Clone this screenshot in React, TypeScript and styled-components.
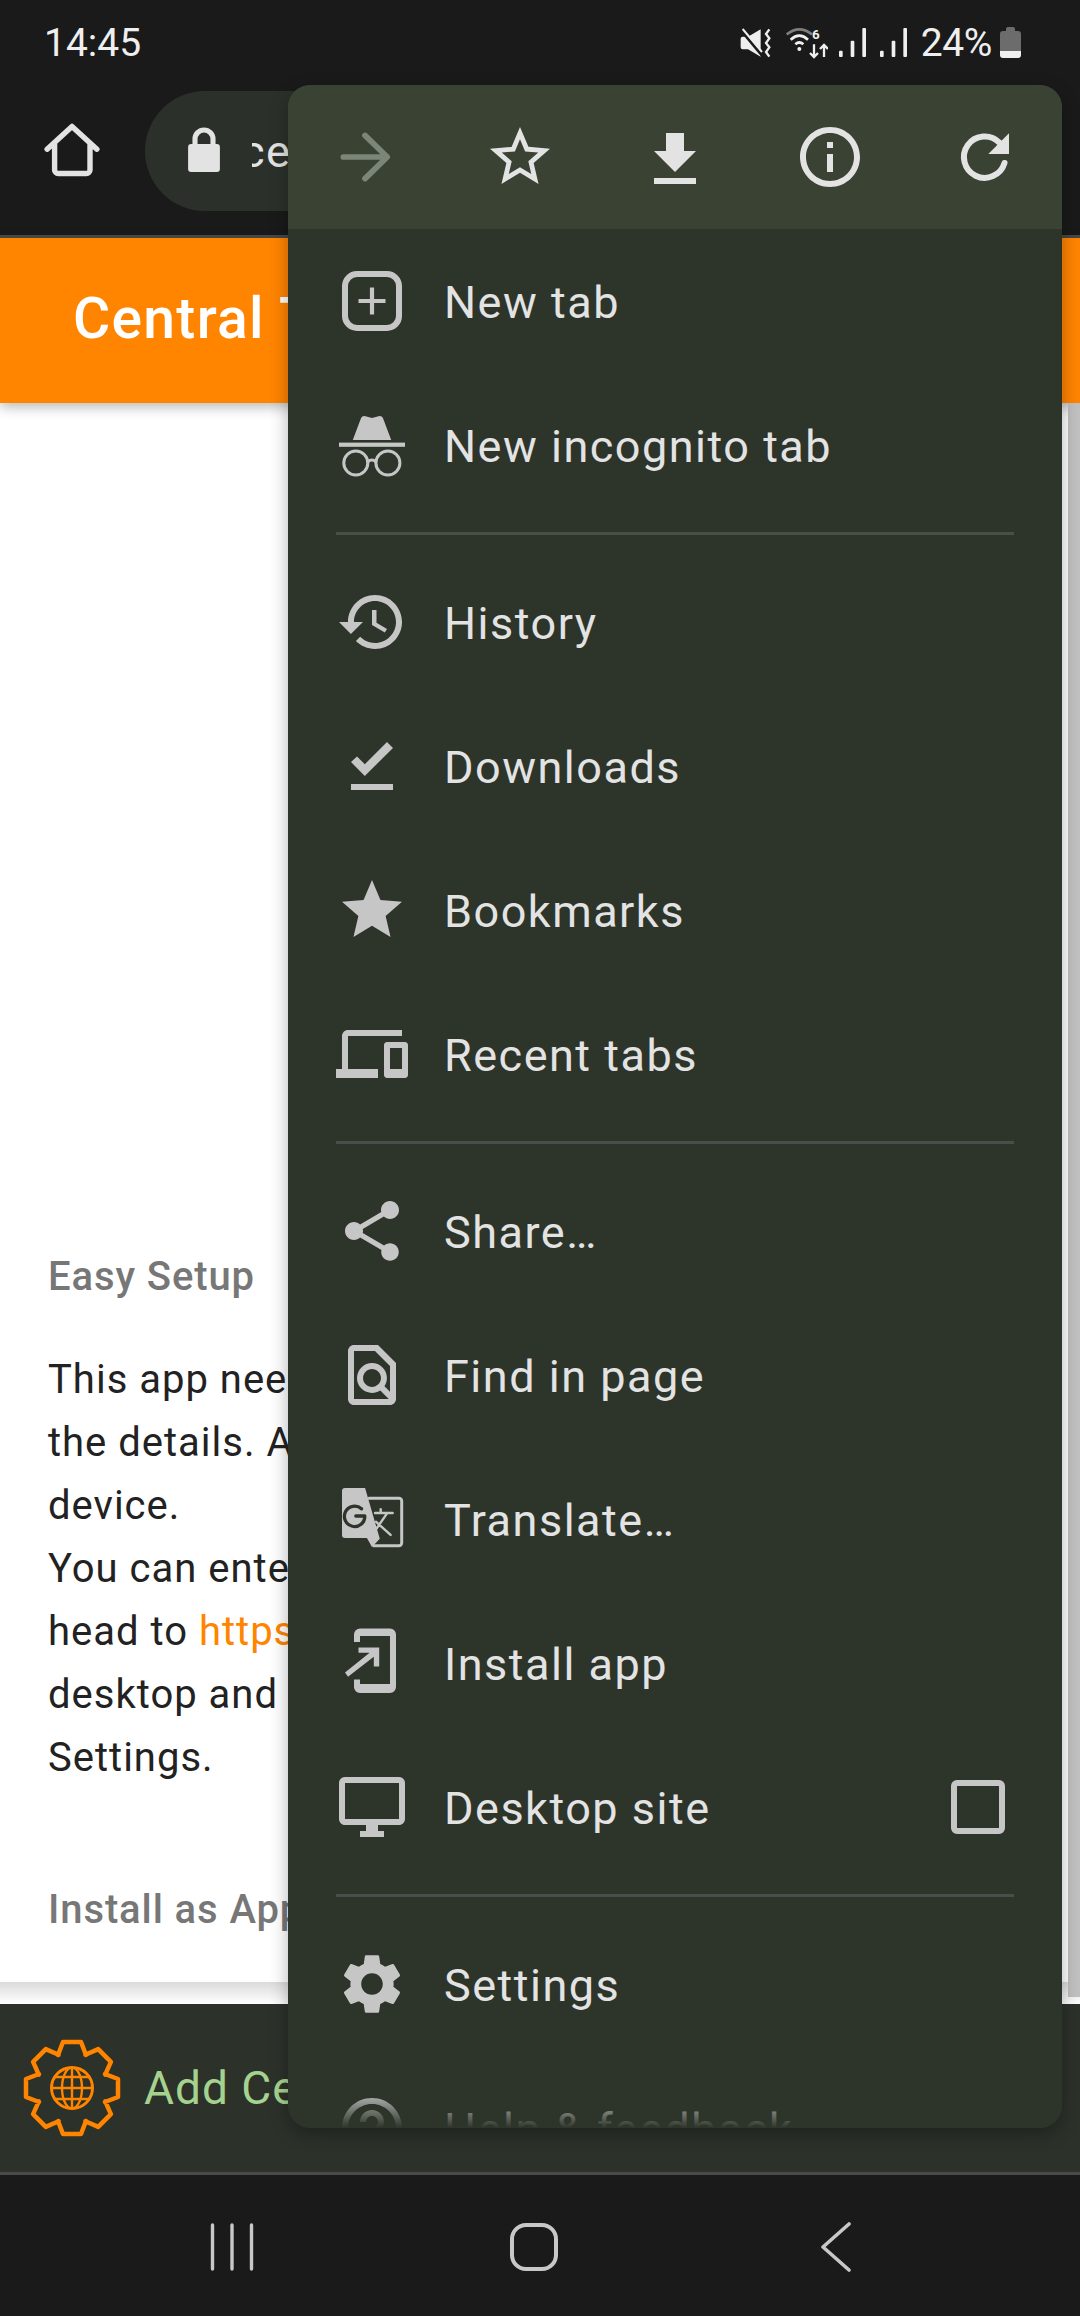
import React from 'react';

import styled, { createGlobalStyle } from 'styled-components';

const GlobalStyle = createGlobalStyle`
  html, body {
    margin: 0;
    padding: 0;
    background: #1a1a1a;
  }
  * {
    box-sizing: border-box;
  }
`;

const Screen = styled.div`
  position: relative;
  display: flex;
  flex-direction: column;
  width: 1080px;
  height: 2316px;
  overflow: hidden;
  font-family: Roboto, 'Noto Sans', sans-serif;
`;

const Chrome = styled.header`
  background: #1a1a1a;
  border-bottom: 3px solid #4a4a4a;
  height: 238px;
`;

const StatusBar = styled.div`
  display: flex;
  align-items: center;
  height: 67px;
  padding: 18px 59px 0 44px;
  color: #efefef;
`;

const Clock = styled.span`
  font-size: 39px;
`;

const StatusIcons = styled.div`
  display: flex;
  align-items: center;
  margin-left: auto;
`;

const StatusSvg = styled.svg<{ $left?: number }>`
  display: block;
  flex: none;
  margin-left: ${({ $left }) => $left || 0}px;
`;

const Percent = styled.span`
  margin-left: 14px;
  margin-right: 8px;
  font-size: 39px;
  letter-spacing: -0.4px;
`;

const Toolbar = styled.div`
  display: flex;
  align-items: center;
  height: 168px;
  padding-left: 36px;
`;

const Pill = styled.div`
  display: flex;
  align-items: center;
  flex: none;
  width: 900px;
  height: 120px;
  margin-left: 37px;
  padding-left: 23px;
  border-radius: 60px;
  background: #2b312a;
`;

const UrlClip = styled.div`
  width: 300px;
  margin-left: 12px;
  overflow: hidden;
  color: #e3e3e3;
  font-size: 45px;
  letter-spacing: 1.5px;
  white-space: nowrap;
`;

const UrlText = styled.span`
  display: block;
  margin-left: -11px;
`;

const Page = styled.main`
  position: relative;
  display: flex;
  flex-direction: column;
  flex: 1;
  background: #fff;
`;

const Banner = styled.div`
  display: flex;
  align-items: center;
  height: 165px;
  padding: 0 0 4px 73px;
  background: #ff8400;
  box-shadow: 0 4px 12px rgba(0, 0, 0, 0.28);
  color: #fff;
  font-size: 57px;
  font-weight: 500;
  letter-spacing: 1.3px;
  white-space: nowrap;
`;

const Article = styled.article`
  flex: 1;
  padding: 842px 0 0 48px;
  color: #222;
  font-size: 40px;
  letter-spacing: 1px;
  line-height: 63px;
  white-space: nowrap;
`;

const Heading = styled.h2`
  margin: 0;
  color: #777;
  font-size: 40px;
  font-weight: 500;
  letter-spacing: 0.9px;
  line-height: 63px;
`;

const Paragraph = styled.p`
  margin: 40px 0 89px;
`;

const PageLink = styled.a`
  color: #ff8400;
`;

const ContentEdge = styled.div`
  height: 22px;
  border-top: 1px solid #dcdcdc;
  background: linear-gradient(#dcdcdc, #ffffff);
`;

const Scrollbar = styled.div`
  position: absolute;
  top: 165px;
  right: 0;
  width: 12px;
  height: 1594px;
  background: #c1c1c1;
`;

const InstallBar = styled.div`
  display: flex;
  align-items: center;
  gap: 22px;
  height: 171px;
  padding: 0 0 0 22px;
  background: #2c312a;
  border-bottom: 3px solid #4a4a4a;
  color: #a5d38f;
  font-size: 46px;
  letter-spacing: 1px;
  white-space: nowrap;
`;

const NavBar = styled.nav`
  display: flex;
  align-items: center;
  height: 141px;
  padding: 2px 93px 0 81px;
  background: #1a1a1a;
`;

const NavSlot = styled.div`
  display: flex;
  flex: 1;
  justify-content: center;
`;

const Menu = styled.div`
  position: absolute;
  top: 85px;
  left: 288px;
  width: 774px;
  height: 2043px;
  overflow: hidden;
  border-radius: 22px;
  background: #2d342a;
  box-shadow: 0 6px 18px rgba(0, 0, 0, 0.3);
  &::after {
    content: '';
    position: absolute;
    left: 0;
    right: 0;
    bottom: 0;
    height: 38px;
    background: linear-gradient(rgba(45, 52, 42, 0), #2d342a);
  }
`;

const ActionRow = styled.div`
  display: grid;
  grid-template-columns: repeat(5, 1fr);
  height: 144px;
  background: #3a4333;
`;

const ActionCell = styled.div`
  display: flex;
  align-items: center;
  justify-content: center;
`;

const MenuRow = styled.div`
  display: flex;
  align-items: center;
  gap: 36px;
  height: 144px;
  padding: 0 57px 0 48px;
  color: #e3e3e3;
  font-size: 45px;
  letter-spacing: 1.5px;
`;

const RowLabel = styled.span`
  flex: 1;
  margin-top: 2px;
`;

const Separator = styled.div`
  height: 3px;
  margin: 15px 48px 15px 48px;
  background: #4a4d49;
`;

const Checkbox = styled.div`
  width: 54px;
  height: 54px;
  border: 6px solid #c6c6c6;
  border-radius: 6px;
`;

const IconSvg = styled.svg<{ $color: string }>`
  display: block;
  flex: none;
  width: 72px;
  height: 72px;
  fill: ${({ $color }) => $color};
`;

const ICON_GREY = '#c6c6c6';
const ICON_LIGHT = '#e3e3e3';

const Icon = ({ color = ICON_GREY, children }: { color?: string; children: React.ReactNode }) => (
  <IconSvg viewBox="0 0 24 24" $color={color}>
    {children}
  </IconSvg>
);

const Stroke = styled.g<{ $color: string; $width: number }>`
  fill: none;
  stroke: ${({ $color }) => $color};
  stroke-width: ${({ $width }) => $width};
  stroke-linecap: round;
  stroke-linejoin: round;
`;

const NewTabIcon = () => (
  <Icon>
    <Stroke $color={ICON_GREY} $width={2}>
      <rect x="3" y="3" width="18" height="18" rx="4" />
    </Stroke>
    <path d="M11.3 7.5h1.4v3.8h3.8v1.4h-3.8v3.8h-1.4v-3.8H7.5v-1.4h3.8z" />
  </Icon>
);

const IncognitoIcon = () => (
  <Icon>
    <path d="M5.6 10.3L8.2 3.4Q8.6 2.2 9.8 2.4L12 3L14.2 2.4Q15.4 2.2 15.8 3.4L18.4 10.3Z" />
    <rect x="1" y="11.2" width="22" height="1.4" />
    <Stroke $color={ICON_GREY} $width={1}>
      <circle cx="6.6" cy="18" r="4" />
      <circle cx="17.3" cy="18" r="4" />
      <path d="M10.6 17.6Q12 16.4 13.3 17.6" />
    </Stroke>
  </Icon>
);

const TranslateIcon = () => (
  <Icon>
    <path d="M3 1.7H9.7L14.6 18.6L12 21.3L10.3 18.3H3A1 1 0 0 1 2 17.3V2.7A1 1 0 0 1 3 1.7Z" />
    <Stroke $color={ICON_GREY} $width={1}>
      <path d="M11 5.1H21A.9.9 0 0 1 21.9 6V20A.9.9 0 0 1 21 20.9H12.6" />
    </Stroke>
    <Stroke $color={ICON_GREY} $width={0.8}>
      <path d="M13 10H18.9M14.9 8.7V10M16.9 10.3L13 15.9M13.3 12.9L18.2 17.3" />
    </Stroke>
    <Stroke $color="#2d342a" $width={1.1}>
      <path d="M8.5 8.6A3.4 3.4 0 1 0 9.6 11H6.6" />
    </Stroke>
  </Icon>
);

const InstallIcon = () => (
  <Icon>
    <path d="M6 5V2.5A2 2 0 0 1 8 .5H18A2 2 0 0 1 20 2.5V20A2 2 0 0 1 18 22H8A2 2 0 0 1 6 20V17.5H8V19H18V3H8V5Z" />
    <path d="M7.5 6.8H14.4V13.2H12.6V9.9L4 16.6L3 15.2L11.2 8.6H7.5Z" />
  </Icon>
);

const menuPaths: Record<string, string> = {
  star: 'M22 9.24l-7.19-.62L12 2 9.19 8.63 2 9.24l5.46 4.73L5.82 21 12 17.27 18.18 21l-1.63-7.03L22 9.24zM12 15.4l-3.76 2.27 1-4.28-3.32-2.88 4.38-.38L12 6.1l1.71 4.04 4.38.38-3.32 2.88 1 4.28L12 15.4z',
  download: 'M19 10h-4V4H9v6H5l7 7 7-7zM5 19v2h14v-2H5z',
  info: 'M11 7h2v2h-2zm0 4h2v6h-2zm1-9C6.48 2 2 6.48 2 12s4.48 10 10 10 10-4.48 10-10S17.52 2 12 2zm0 18c-4.41 0-8-3.59-8-8s3.59-8 8-8 8 3.59 8 8-3.59 8-8 8z',
  history:
    'M13 3c-4.97 0-9 4.03-9 9H1l3.89 3.89.07.14L9 12H6c0-3.87 3.13-7 7-7s7 3.13 7 7-3.13 7-7 7c-1.93 0-3.68-.79-4.94-2.06l-1.42 1.42C8.27 19.99 10.51 21 13 21c4.97 0 9-4.03 9-9s-4.03-9-9-9zm-1 5v5l4.28 2.54.72-1.21-3.5-2.08V8H12z',
  downloads: 'M5 18h14v2H5v-2zm4.6-2.7L5 10.7l2-1.9 2.6 2.6L17 4l2 2-9.4 9.3z',
  bookmarks: 'M12 17.27L18.18 21l-1.64-7.03L22 9.24l-7.19-.61L12 2 9.19 8.63 2 9.24l5.46 4.73L5.82 21z',
  devices:
    'M4 6h18V4H4c-1.1 0-2 .9-2 2v11H0v3h14v-3H4V6zm19 2h-6c-.55 0-1 .45-1 1v10c0 .55.45 1 1 1h6c.55 0 1-.45 1-1V9c0-.55-.45-1-1-1zm-1 9h-4v-7h4v7z',
  share:
    'M18 16.08c-.76 0-1.44.3-1.96.77L8.91 12.7c.05-.23.09-.46.09-.7s-.04-.47-.09-.7l7.05-4.11c.54.5 1.25.81 2.04.81 1.66 0 3-1.34 3-3s-1.34-3-3-3-3 1.34-3 3c0 .24.04.47.09.7L8.04 9.81C7.5 9.31 6.79 9 6 9c-1.66 0-3 1.34-3 3s1.34 3 3 3c.79 0 1.5-.31 2.04-.81l7.12 4.16c-.05.21-.08.43-.08.65 0 1.61 1.31 2.92 2.92 2.92 1.61 0 2.92-1.31 2.92-2.92s-1.31-2.92-2.92-2.92z',
  find: 'M14 2H6c-1.1 0-2 .9-2 2v16c0 1.1.9 2 2 2h12c1.1 0 2-.9 2-2V8l-6-6zM6 4h7l5 5v8.58l-1.84-1.84c1.28-1.94 1.07-4.57-.64-6.28C14.55 8.49 13.28 8 12 8c-1.28 0-2.55.49-3.53 1.46-1.95 1.95-1.95 5.11 0 7.05.97.97 2.25 1.46 3.53 1.46.96 0 1.92-.28 2.75-.83L17.6 20H6V4zm8.11 11.1c-.56.56-1.31.88-2.11.88s-1.55-.31-2.11-.88c-.56-.56-.88-1.31-.88-2.11s.31-1.55.88-2.11c.56-.57 1.31-.88 2.11-.88s1.55.31 2.11.88c.56.56.88 1.31.88 2.11s-.31 1.55-.88 2.11z',
  desktop:
    'M21 2H3c-1.1 0-2 .9-2 2v12c0 1.1.9 2 2 2h7v2H8v2h8v-2h-2v-2h7c1.1 0 2-.9 2-2V4c0-1.1-.9-2-2-2zm0 14H3V4h18v12z',
  settings:
    'M19.14 12.94c.04-.3.06-.61.06-.94 0-.32-.02-.64-.07-.94l2.03-1.58c.18-.14.23-.41.12-.61l-1.92-3.32c-.12-.22-.37-.29-.59-.22l-2.39.96c-.5-.38-1.03-.7-1.62-.94l-.36-2.54c-.04-.24-.24-.41-.48-.41h-3.84c-.24 0-.43.17-.47.41l-.36 2.54c-.59.24-1.13.57-1.62.94l-2.39-.96c-.22-.08-.47 0-.59.22L2.74 8.87c-.12.21-.08.47.12.61l2.03 1.58c-.05.3-.09.63-.09.94s.02.64.07.94l-2.03 1.58c-.18.14-.23.41-.12.61l1.92 3.32c.12.22.37.29.59.22l2.39-.96c.5.38 1.03.7 1.62.94l.36 2.54c.05.24.24.41.48.41h3.84c.24 0 .44-.17.47-.41l.36-2.54c.59-.24 1.13-.56 1.62-.94l2.39.96c.22.08.47 0 .59-.22l1.92-3.32c.12-.22.07-.47-.12-.61l-2.01-1.58zM12 15.6c-1.98 0-3.6-1.62-3.6-3.6s1.62-3.6 3.6-3.6 3.6 1.62 3.6 3.6-1.62 3.6-3.6 3.6z',
  help: 'M11 18h2v-2h-2v2zm1-16C6.48 2 2 6.48 2 12s4.48 10 10 10 10-4.48 10-10S17.52 2 12 2zm0 18c-4.41 0-8-3.59-8-8s3.59-8 8-8 8 3.59 8 8-3.59 8-8 8zm0-14c-2.21 0-4 1.79-4 4h2c0-1.1.9-2 2-2s2 .9 2 2c0 2-3 1.75-3 5h2c0-2.25 3-2.5 3-5 0-2.21-1.79-4-4-4z',
};

const PathIcon = ({ name, color }: { name: string; color?: string }) => (
  <Icon color={color}>
    <path d={menuPaths[name]} />
  </Icon>
);

// gear outline: eight tapered teeth around the centre of a 100 box
const gearPath = Array.from({ length: 8 }, (_, i) => {
  const angle = (i * Math.PI) / 4;
  const turn = (x: number, y: number) => {
    const px = 50 + x * Math.cos(angle) - y * Math.sin(angle);
    const py = 50 + x * Math.sin(angle) + y * Math.cos(angle);
    return `${px.toFixed(1)} ${py.toFixed(1)}`;
  };
  return `L${turn(-14, -33)} L${turn(-9, -46)} L${turn(9, -46)} L${turn(14, -33)}`;
})
  .join(' ')
  .replace('L', 'M');

const GearGlobe = () => (
  <svg width="100" height="100" viewBox="0 0 100 100" fill="none" stroke="#ff8400" strokeLinejoin="round">
    <path d={`${gearPath} Z`} strokeWidth="4.5" />
    <circle cx="50" cy="50" r="20.5" strokeWidth="3" />
    <ellipse cx="50" cy="50" rx="10" ry="20.5" strokeWidth="2.4" />
    <path d="M50 29.5V70.5M29.5 50H70.5M33 39H67M33 61H67" strokeWidth="2.4" />
  </svg>
);

const MuteGlyph = () => (
  <StatusSvg width="32" height="30" viewBox="0 0 96 90">
    <path d="M2 32Q2 26 8 26H24L62 4V86L24 64H8Q2 64 2 58Z" fill="#efefef" />
    <path d="M2 5L66 82" stroke="#1a1a1a" strokeWidth="9" />
    <path d="M8 3L66 72" stroke="#efefef" strokeWidth="6" />
    <path d="M88 4L78 18L88 31L78 45L88 58L78 72L88 86" fill="none" stroke="#efefef" strokeWidth="7" />
  </StatusSvg>
);

const WifiGlyph = () => (
  <StatusSvg $left={14} width="42" height="32" viewBox="0 0 126 96">
    <path d="M2 22Q40 -8 78 22" fill="none" stroke="#7d7d7d" strokeWidth="8" />
    <path d="M14 38Q40 14 66 38" fill="none" stroke="#efefef" strokeWidth="8" />
    <path d="M28 52Q40 41 52 52" fill="none" stroke="#efefef" strokeWidth="8" />
    <circle cx="40" cy="66" r="6" fill="#efefef" />
    <text x="78" y="36" fontFamily="Roboto, sans-serif" fontSize="40" fontWeight="700" fill="#efefef">
      6
    </text>
    <path
      d="M84 52V90M72 78L84 90L96 78M114 90V54M102 66L114 54L126 66"
      fill="none"
      stroke="#efefef"
      strokeWidth="7"
    />
  </StatusSvg>
);

const SignalGlyph = ({ left }: { left: number }) => (
  <StatusSvg $left={left} width="27" height="29" viewBox="0 0 81 87">
    <rect x="0" y="68" width="11" height="19" rx="3" fill="#efefef" />
    <rect x="35" y="38" width="11" height="49" rx="3" fill="#efefef" />
    <rect x="70" y="0" width="11" height="87" rx="3" fill="#efefef" />
  </StatusSvg>
);

const BatteryGlyph = () => (
  <StatusSvg width="21" height="31" viewBox="0 0 21 31">
    <path d="M6 4V2Q6 0 8 0H13Q15 0 15 2V4H18Q21 4 21 7V24H0V7Q0 4 3 4Z" fill="#6c6c6c" />
    <path d="M0 24H21V28Q21 31 18 31H3Q0 31 0 28Z" fill="#efefef" />
  </StatusSvg>
);

const HomeGlyph = () => (
  <Icon color={ICON_LIGHT}>
    <Stroke $color={ICON_LIGHT} $width={1.8}>
      <path d="M3.7 11.4L12 3.8L20.3 11.4M6.2 9.6V18.3A1.2 1.2 0 0 0 7.4 19.5H16.8A1.2 1.2 0 0 0 18 18.3V9.6" />
    </Stroke>
  </Icon>
);

const LockGlyph = () => (
  <Icon color={ICON_LIGHT}>
    <rect x="6.7" y="9.7" width="10.6" height="9.3" rx="1" />
    <Stroke $color={ICON_LIGHT} $width={1.7}>
      <path d="M9 9.7V8A3 3 0 0 1 15 8V9.7" />
    </Stroke>
  </Icon>
);

const ForwardGlyph = () => (
  <Icon color="#7b8679">
    <Stroke $color="#7b8679" $width={1.9}>
      <path d="M4.8 12H19.2M12 4.8L19.4 12L12 19.2" />
    </Stroke>
  </Icon>
);

const RefreshGlyph = () => (
  <Icon color={ICON_LIGHT}>
    <Stroke $color={ICON_LIGHT} $width={2}>
      <path d="M18.5 14A6.9 6.9 0 1 1 16.8 7.2" />
    </Stroke>
    <path d="M20 4.1V11H13.1Z" />
  </Icon>
);

type MenuEntry = { label: string; icon: React.ReactNode; checkbox?: boolean };

const menuGroups: MenuEntry[][] = [
  [
    { label: 'New tab', icon: <NewTabIcon /> },
    { label: 'New incognito tab', icon: <IncognitoIcon /> },
  ],
  [
    { label: 'History', icon: <PathIcon name="history" /> },
    { label: 'Downloads', icon: <PathIcon name="downloads" /> },
    { label: 'Bookmarks', icon: <PathIcon name="bookmarks" /> },
    { label: 'Recent tabs', icon: <PathIcon name="devices" /> },
  ],
  [
    { label: 'Share…', icon: <PathIcon name="share" /> },
    { label: 'Find in page', icon: <PathIcon name="find" /> },
    { label: 'Translate…', icon: <TranslateIcon /> },
    { label: 'Install app', icon: <InstallIcon /> },
    { label: 'Desktop site', icon: <PathIcon name="desktop" />, checkbox: true },
  ],
  [
    { label: 'Settings', icon: <PathIcon name="settings" /> },
    { label: 'Help & feedback', icon: <PathIcon name="help" /> },
  ],
];

export default function App() {
  return (
    <Screen>
      <GlobalStyle />
      <Chrome>
        <StatusBar>
          <Clock>14:45</Clock>
          <StatusIcons>
            <MuteGlyph />
            <WifiGlyph />
            <SignalGlyph left={11} />
            <SignalGlyph left={14} />
            <Percent>24%</Percent>
            <BatteryGlyph />
          </StatusIcons>
        </StatusBar>
        <Toolbar>
          <HomeGlyph />
          <Pill>
            <LockGlyph />
            <UrlClip>
              <UrlText>central</UrlText>
            </UrlClip>
          </Pill>
        </Toolbar>
      </Chrome>
      <Page>
        <Banner>Central T</Banner>
        <Article>
          <Heading>Easy Setup</Heading>
          <Paragraph>
            This app needs
            <br />
            the details. All
            <br />
            device.
            <br />
            You can enter
            <br />
            head to <PageLink>https://</PageLink>
            <br />
            desktop and
            <br />
            Settings.
          </Paragraph>
          <Heading>Install as App</Heading>
        </Article>
        <ContentEdge />
        <Scrollbar />
      </Page>
      <InstallBar>
        <GearGlobe />
        Add Central
      </InstallBar>
      <NavBar>
        <NavSlot>
          <svg width="44" height="48" viewBox="0 0 44 48" fill="none" stroke="#c8c8c8" strokeWidth="3.4" strokeLinecap="round">
            <path d="M2.5 2V46M22 2V46M41.5 2V46" />
          </svg>
        </NavSlot>
        <NavSlot>
          <svg width="48" height="48" viewBox="0 0 48 48" fill="none" stroke="#c8c8c8" strokeWidth="4">
            <rect x="2" y="2" width="44" height="44" rx="14" />
          </svg>
        </NavSlot>
        <NavSlot>
          <svg width="32" height="50" viewBox="0 0 32 50" fill="none" stroke="#c8c8c8" strokeWidth="3.6" strokeLinecap="round" strokeLinejoin="round">
            <path d="M29 2L3 25L29 48" />
          </svg>
        </NavSlot>
      </NavBar>
      <Menu>
        <ActionRow>
          <ActionCell>
            <ForwardGlyph />
          </ActionCell>
          <ActionCell>
            <PathIcon name="star" color={ICON_LIGHT} />
          </ActionCell>
          <ActionCell>
            <PathIcon name="download" color={ICON_LIGHT} />
          </ActionCell>
          <ActionCell>
            <PathIcon name="info" color={ICON_LIGHT} />
          </ActionCell>
          <ActionCell>
            <RefreshGlyph />
          </ActionCell>
        </ActionRow>
        {menuGroups.map((group, index) => (
          <React.Fragment key={group[0].label}>
            {index > 0 && <Separator />}
            {group.map((entry) => (
              <MenuRow key={entry.label}>
                {entry.icon}
                <RowLabel>{entry.label}</RowLabel>
                {entry.checkbox && <Checkbox />}
              </MenuRow>
            ))}
          </React.Fragment>
        ))}
      </Menu>
    </Screen>
  );
}
